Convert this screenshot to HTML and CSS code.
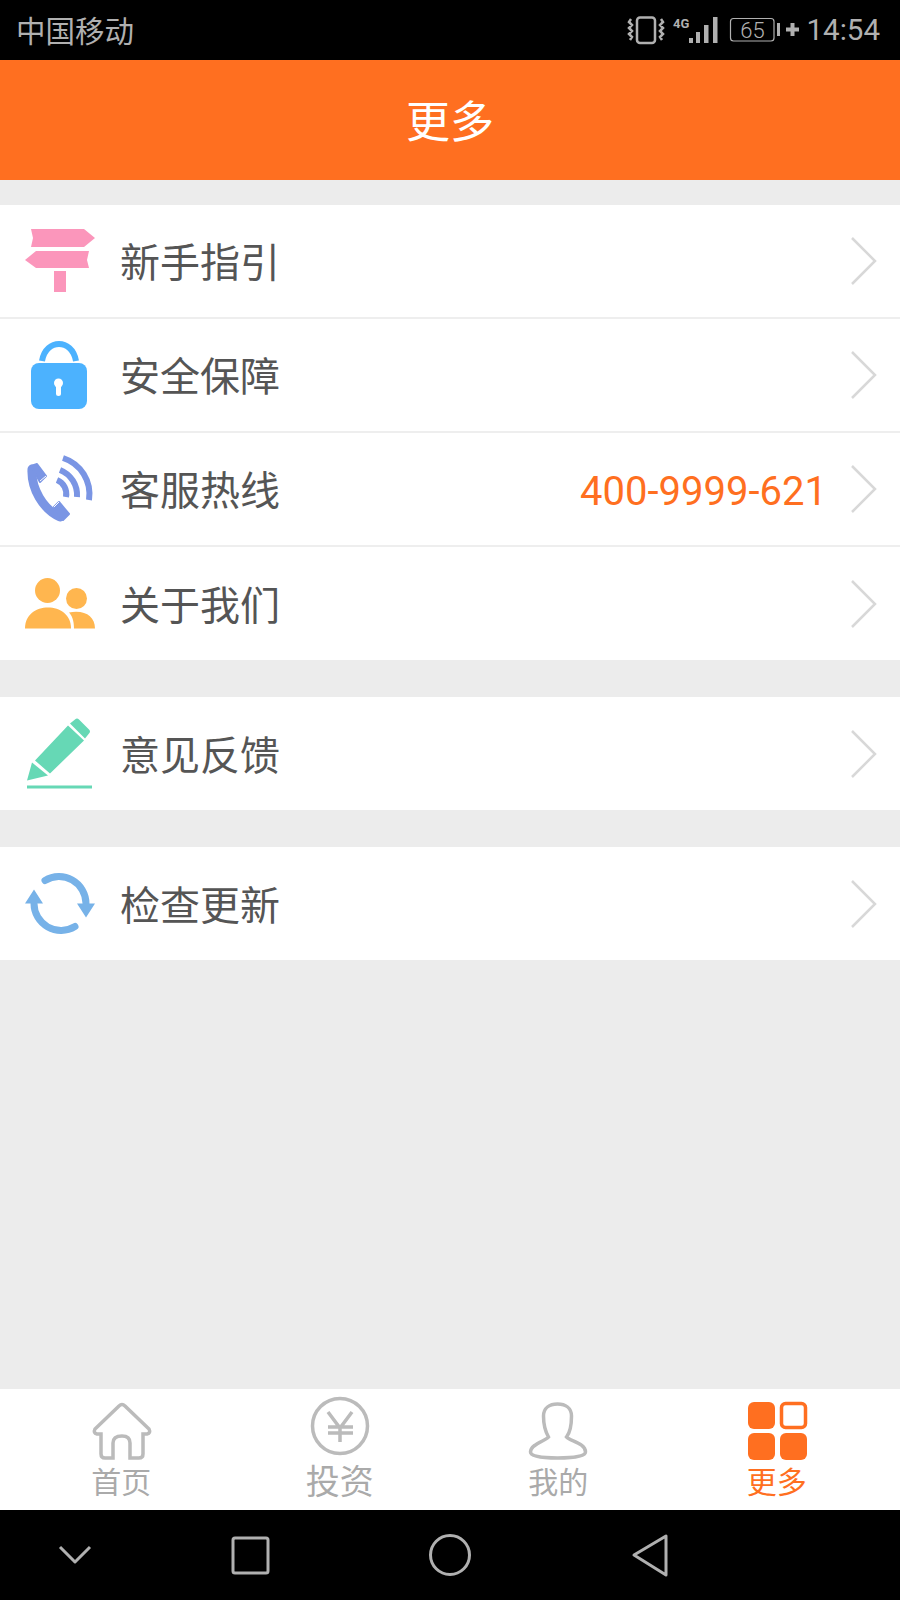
FILE: index.html
```html
<!DOCTYPE html>
<html lang="zh-CN">
<head>
    <meta charset="UTF-8">
    <meta name="viewport" content="width=device-width, initial-scale=1.0">
    <title>更多</title>
    <link rel="stylesheet" href="styles.css">
</head>
<body>
    <div class="app">
        <!-- Status bar -->
        <div class="statusBar">
            <span class="carrier">中国移动</span>
            <svg class="statusIcons" viewBox="625 0 175 60" width="175" height="60">
                <rect x="636" y="17.500" width="18" height="25.500" rx="3" fill="none" stroke="#b0b0b0" stroke-width="2.500"/>
                <path d="M630 19 l-2 3 l3 3 l-3 3 l3 3 l-3 3 l3 3 l-2 3 M660 19 l2 3 l-3 3 l3 3 l-3 3 l3 3 l-3 3 l2 3" fill="none" stroke="#b0b0b0" stroke-width="2.500"/>
                <text class="netType" x="672" y="28">4G</text>
                <rect x="688" y="38" width="4" height="5" fill="#b0b0b0"/>
                <rect x="695" y="32" width="4" height="11" fill="#b0b0b0"/>
                <rect x="703" y="25" width="4.500" height="18" fill="#b0b0b0"/>
                <rect x="712" y="17" width="4.500" height="26" fill="#b0b0b0"/>
                <rect x="729.500" y="18.500" width="43.500" height="22.500" rx="3" fill="none" stroke="#b0b0b0" stroke-width="1.200"/>
                <text class="batteryLevel" x="751.500" y="38">65</text>
                <rect x="776" y="23" width="3" height="13" fill="#b0b0b0"/>
                <path d="M785 29.500 h13 M791.500 23 v13" fill="none" stroke="#b0b0b0" stroke-width="4"/>
            </svg>
            <span class="clock">14:54</span>
        </div>

        <!-- Title -->
        <div class="titleBar">更多</div>

        <!-- Menu -->
        <div class="content">
            <div class="group">
                <div class="row">
                    <svg class="rowIcon" viewBox="25 226 70 70">
                        <path d="M31 229 H84 L95 238 L84 247 H31 L33 238 Z M36 251 H89 L87 260 L89 268 H36 L25 260 Z M54 271 H66 V292 H54 Z" fill="#fb96bb"/>
                    </svg>
                    <span class="rowLabel">新手指引</span>
                    <svg class="chevron" viewBox="0 0 27 50"><path d="M2 2 L25 25 L2 48"/></svg>
                </div>
                <div class="row">
                    <svg class="rowIcon" viewBox="25 341 70 70">
                        <path d="M42 362 C44 350 52 345 59 345 C66 345 74 350 76 362" fill="none" stroke="#4cb2fe" stroke-width="6"/>
                        <rect x="31" y="364" width="56" height="46" rx="8" fill="#4cb2fe"/>
                        <circle cx="58.500" cy="384" r="4.500" fill="#fff"/>
                        <rect x="56" y="384" width="5" height="13" rx="2.500" fill="#fff"/>
                    </svg>
                    <span class="rowLabel">安全保障</span>
                    <svg class="chevron" viewBox="0 0 27 50"><path d="M2 2 L25 25 L2 48"/></svg>
                </div>
                <div class="row">
                    <svg class="rowIcon" viewBox="25 455 70 70">
                        <path d="M32 470 C31 490 43 510 60 518" fill="none" stroke="#7a95e4" stroke-width="9" stroke-linecap="round"/>
                        <path d="M31 467 L37 465 L46 477 L40 483 Z M54 508 L59 503 L69 515 L63 521 Z" fill="#7a95e4" stroke="#7a95e4" stroke-width="2" stroke-linejoin="round"/>
                        <path d="M40 482 L46 477 M54 508 L59 503" fill="none" stroke="#fff" stroke-width="1"/>
                        <path d="M63 459 A38 38 0 0 1 89 501 M60 471 A27 27 0 0 1 77 498 M57 481 A15 15 0 0 1 66 498" fill="none" stroke="#7a95e4" stroke-width="6"/>
                    </svg>
                    <span class="rowLabel">客服热线</span>
                    <span class="rowValue">400-9999-621</span>
                    <svg class="chevron" viewBox="0 0 27 50"><path d="M2 2 L25 25 L2 48"/></svg>
                </div>
                <div class="row">
                    <svg class="rowIcon" viewBox="25 568.500 70 70">
                        <circle cx="47.500" cy="590" r="12.500" fill="#ffb64f"/>
                        <circle cx="76.500" cy="598" r="10.500" fill="#ffb64f"/>
                        <path d="M25 628 C25 614 36 607 48 607 C60 607 71 614 71 628 Z" fill="#ffb64f"/>
                        <path d="M69 612 C85 609 95 616 95 628 H74 C74 620 72 615 69 612 Z" fill="#ffb64f"/>
                    </svg>
                    <span class="rowLabel">关于我们</span>
                    <svg class="chevron" viewBox="0 0 27 50"><path d="M2 2 L25 25 L2 48"/></svg>
                </div>
            </div>

            <div class="group">
                <div class="row">
                    <svg class="rowIcon" viewBox="25 718.500 70 70">
                        <path d="M27 780 L32 762 L48 775 Z M35 760 L68 725 L84 740 L50 773 Z M70 723 L75 719 Q77 717 79 719 L89 729 Q91 731 89 733 L85 738 Z" fill="#66d8b5"/>
                        <rect x="27" y="785" width="65" height="3" fill="#66d8b5"/>
                    </svg>
                    <span class="rowLabel">意见反馈</span>
                    <svg class="chevron" viewBox="0 0 27 50"><path d="M2 2 L25 25 L2 48"/></svg>
                </div>
            </div>

            <div class="group">
                <div class="row">
                    <svg class="rowIcon" viewBox="25 868.500 70 70">
                        <path d="M45 880 A27 27 0 0 1 86 903 M34 903 A27 27 0 0 0 75 926" fill="none" stroke="#77b2e8" stroke-width="7" stroke-linecap="round"/>
                        <path d="M77 903 H95 L86 917 Z M25 903 H43 L34 889 Z" fill="#77b2e8"/>
                    </svg>
                    <span class="rowLabel">检查更新</span>
                    <svg class="chevron" viewBox="0 0 27 50"><path d="M2 2 L25 25 L2 48"/></svg>
                </div>
            </div>
        </div>

        <!-- Tabs -->
        <div class="tabBar">
            <div class="tab">
                <svg class="tabIcon" viewBox="91 1401 60 60">
                    <path d="M113 1458 H105 Q101 1458 101 1454 V1434 H97 Q93 1433 95 1429 L119 1406 Q122 1403 125 1406 L149 1429 Q151 1433 147 1434 H143 V1454 Q143 1458 139 1458 H130 V1443 Q130 1436 122 1436 Q113 1436 113 1443 Z"/>
                </svg>
                <span class="tabLabel">首页</span>
            </div>
            <div class="tab">
                <svg class="tabIcon" viewBox="310 1401 60 60">
                    <circle cx="340" cy="1426" r="27.500"/>
                    <path d="M328 1412 L340 1428 L352 1412 M328 1427 H353 M328 1433 H353 M340 1428 V1442"/>
                </svg>
                <span class="tabLabel tabLabelBig">投资</span>
            </div>
            <div class="tab">
                <svg class="tabIcon" viewBox="528.500 1401 60 60">
                    <path d="M549 1437 C545 1430 544 1420 544 1416 C544 1408 550 1404 558 1404 C566 1404 572 1408 572 1416 C572 1424 571 1432 567 1437 C570 1441 586 1443 586 1452 C586 1456 575 1458 558 1458 C541 1458 531 1456 531 1452 C531 1444 546 1441 549 1437 Z"/>
                </svg>
                <span class="tabLabel">我的</span>
            </div>
            <div class="tab tabActive">
                <svg class="tabIcon" viewBox="747 1401 60 60">
                    <rect x="748" y="1402" width="27" height="27" rx="6" fill="#ff6f20" stroke="none"/>
                    <rect x="781.500" y="1403.500" width="24" height="24" rx="4"/>
                    <rect x="748" y="1433" width="27" height="27" rx="6" fill="#ff6f20" stroke="none"/>
                    <rect x="780" y="1433" width="27" height="27" rx="6" fill="#ff6f20" stroke="none"/>
                </svg>
                <span class="tabLabel">更多</span>
            </div>
        </div>

        <!-- Android buttons -->
        <div class="navBar">
            <svg viewBox="0 1510 900 90" width="900" height="90">
                <path d="M60 1547 L75 1562 L90 1547"/>
                <rect x="233" y="1538" width="35" height="35" rx="2"/>
                <circle cx="450" cy="1555" r="19.500"/>
                <path d="M634 1555 L666 1536 V1575 Z"/>
            </svg>
        </div>
    </div>
</body>
</html>
```

FILE: styles.css
```css
body {
    font-family: Roboto, "Noto Sans CJK SC", sans-serif;
    margin: 0;
    background-color: #ececec;
}

.app {
    display: flex;
    flex-direction: column;
    height: 1600px;
}

.statusBar {
    display: flex;
    align-items: center;
    height: 60px;
    padding: 0 20px 0 16px;
    background-color: #000;
    color: #b0b0b0;
    font-size: 29.5px;
}

.carrier {
    flex: 1;
    margin-bottom: 2px;
}

.clock {
    margin-left: -2px;
}

.statusIcons {
    display: block;
    margin-right: 8px;
}

.netType {
    fill: #b0b0b0;
    font-size: 13px;
    font-weight: 700;
}

.batteryLevel {
    fill: #b0b0b0;
    font-size: 22px;
    font-weight: 300;
    text-anchor: middle;
}

.titleBar {
    height: 120px;
    line-height: 126px;
    text-align: center;
    background-color: #ff6f20;
    color: #fff;
    font-size: 44px;
}

.content {
    flex: 1;
    padding-top: 25px;
}

.group {
    margin-bottom: 37px;
    background-color: #fff;
}

.row {
    display: flex;
    align-items: center;
    box-sizing: border-box;
    height: 114px;
    padding: 0 23px 0 25px;
    border-bottom: 2px solid #eee;
}

.row:last-child {
    height: 113px;
    border-bottom: none;
}

.rowIcon {
    flex: none;
    width: 70px;
    height: 70px;
    margin-right: 25px;
    overflow: visible;
}

.rowLabel {
    flex: 1;
    margin-bottom: 2px;
    color: #555;
    font-size: 40px;
}

.rowValue {
    margin-top: 4px;
    margin-right: 23px;
    color: #ff6f20;
    font-size: 40px;
}

.chevron {
    flex: none;
    width: 27px;
    height: 50px;
    fill: none;
    stroke: #d8d8d8;
    stroke-width: 2.5;
}

.tabBar {
    display: grid;
    grid-template-columns: repeat(4, 218.5px);
    height: 121px;
    padding-left: 12px;
    box-sizing: border-box;
    background-color: #fff;
}

.tab {
    display: flex;
    flex-direction: column;
    align-items: center;
    padding-top: 12px;
    color: #aaa;
}

.tabIcon {
    width: 60px;
    height: 60px;
    overflow: visible;
    fill: none;
    stroke: #bbb;
    stroke-width: 3.5;
}

.tabLabel {
    height: 36px;
    margin-top: 4px;
    line-height: 36px;
    font-size: 30px;
}

.tabLabelBig {
    font-size: 34px;
    line-height: 34px;
}

.tabActive {
    color: #ff6f20;
}

.tabActive .tabIcon {
    stroke: #ff6f20;
}

.navBar {
    height: 90px;
    background-color: #000;
}

.navBar svg {
    display: block;
    fill: none;
    stroke: #b0b0b0;
    stroke-width: 3;
    stroke-linejoin: round;
}
```
